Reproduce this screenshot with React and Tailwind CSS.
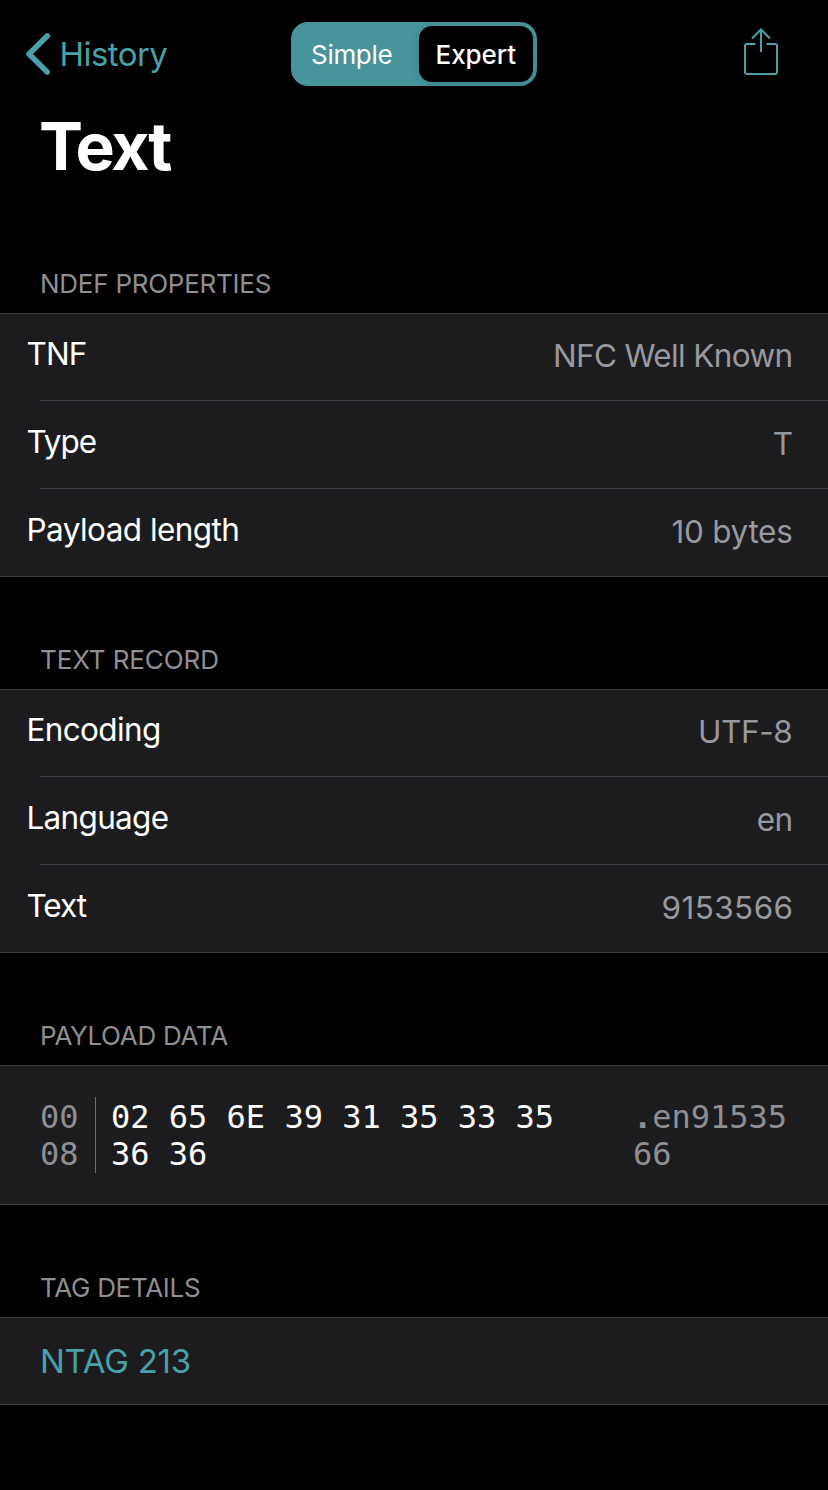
const NDEF = [
  { label: 'TNF', value: 'NFC Well Known', lt: 'tracking-[-0.9px]', vt: 'tracking-[-0.65px]' },
  { label: 'Type', value: 'T', lt: 'tracking-[-1px]', vt: 'tracking-[-0.5px]' },
  { label: 'Payload length', value: '10 bytes', lt: 'tracking-[-0.56px]', vt: 'tracking-[-0.3px]' },
];

const RECORD = [
  { label: 'Encoding', value: 'UTF-8', lt: 'tracking-[-0.65px]', vt: 'tracking-[-0.35px]' },
  { label: 'Language', value: 'en', lt: 'tracking-[-0.7px]', vt: 'tracking-[-0.6px]' },
  { label: 'Text', value: '9153566', lt: 'tracking-[-1px]', vt: 'tracking-[0.4px] -mr-px' },
];

function SectionTitle({ children, tracking = 'tracking-[-0.25px]' }) {
  return (
    <h2 className={`h-14 pl-10 text-[26px] leading-[54px] text-[#8e8e93] ${tracking}`}>{children}</h2>
  );
}

function Panel({ children, className = '' }) {
  return (
    <div className={`border-y border-[#3d3d41] bg-[#1c1c1e] ${className}`}>{children}</div>
  );
}

function Rows({ items }) {
  return (
    <Panel>
      {items.map((row, i) => (
        <div key={row.label}>
          {i > 0 && <div className="ml-10 h-px bg-[#3d3d41]" />}
          <div className={`flex justify-between pl-[26.5px] pr-[35.5px] text-[31.5px] ${i > 0 ? 'h-[87px] leading-[81px]' : 'h-[86px] leading-[79px]'}`}>
            <span className={`text-white ${row.lt}`}>{row.label}</span>
            <span className={`pt-[2px] text-[#98989f] ${row.vt}`}>{row.value}</span>
          </div>
        </div>
      ))}
    </Panel>
  );
}

export default function App() {
  return (
    <div className="h-[1490px] w-[828px] overflow-hidden bg-black font-['Inter',sans-serif] text-white">
      <header className="flex h-[108px] items-start justify-between">
        <button className="mt-[22px] flex h-16 w-[291px] items-center pl-[24px] text-[#48a1a8]">
          <svg width="28" height="44" viewBox="0 0 28 44" fill="none" stroke="currentColor" strokeWidth="5.6" strokeLinecap="round" strokeLinejoin="round">
            <path d="M23.2 4 L5 22 L23.2 40" />
          </svg>
          <span className="ml-[7.5px] text-[33px] leading-[64px] tracking-[-0.55px]">History</span>
        </button>
        <div className="mt-[22px] flex h-16 w-[246px] rounded-[17px] bg-[#48949b] p-1 text-[26px] leading-[57px]">
          <span className="w-[124px] pl-4 tracking-[-0.3px]">Simple</span>
          <span className="w-[114px] rounded-[13px] bg-black pl-[16.5px] font-medium shadow-[0_2px_8px_rgba(0,0,0,0.15)] tracking-[-0.05px]">Expert</span>
        </div>
        <button className="mt-[26px] flex w-[291px] justify-end pr-[48px] text-[#48a1a8]">
          <svg width="38" height="52" viewBox="0 0 38 52" fill="none" stroke="currentColor" strokeWidth="2">
            <path d="M13.5 18 H5 Q3 18 3 20 V46 Q3 48 5 48 H33 Q35 48 35 46 V20 Q35 18 33 18 H24.5" />
            <path d="M19 26 V3.5 M10 12.5 L19 3.5 L28 12.5" />
          </svg>
        </button>
      </header>
      <h1 className="h-[149px] pl-[39px] text-[66px] font-bold leading-[77px] tracking-[-2.3px]">Text</h1>

      <SectionTitle>NDEF PROPERTIES</SectionTitle>
      <Rows items={NDEF} />

      <div className="h-14" />
      <SectionTitle tracking="tracking-[-0.1px]">TEXT RECORD</SectionTitle>
      <Rows items={RECORD} />

      <div className="h-14" />
      <SectionTitle tracking="tracking-[-0.3px]">PAYLOAD DATA</SectionTitle>
      <Panel className="h-[140px]">
        <div className="flex pl-10 pt-[31px] font-['DejaVu_Sans_Mono',monospace] text-[32px] leading-[37px]">
          <div className="w-[55px] pt-[2px] text-[#8e8e93]">00<br />08</div>
          <div className="h-[76px] w-px bg-[#6e6e73]" />
          <div className="ml-[15px] w-[522px] pt-[2px]">02 65 6E 39 31 35 33 35<br />36 36</div>
          <div className="pt-[2px] text-[#8e8e93]"><span className="font-bold">.</span>en91535<br />66</div>
        </div>
      </Panel>

      <div className="h-14" />
      <SectionTitle tracking="tracking-[-0.3px]">TAG DETAILS</SectionTitle>
      <Panel className="h-[88px]">
        <a className="block pl-10 text-[33px] leading-[86px] tracking-[-0.25px] text-[#48a1a8]">NTAG 213</a>
      </Panel>
    </div>
  );
}
